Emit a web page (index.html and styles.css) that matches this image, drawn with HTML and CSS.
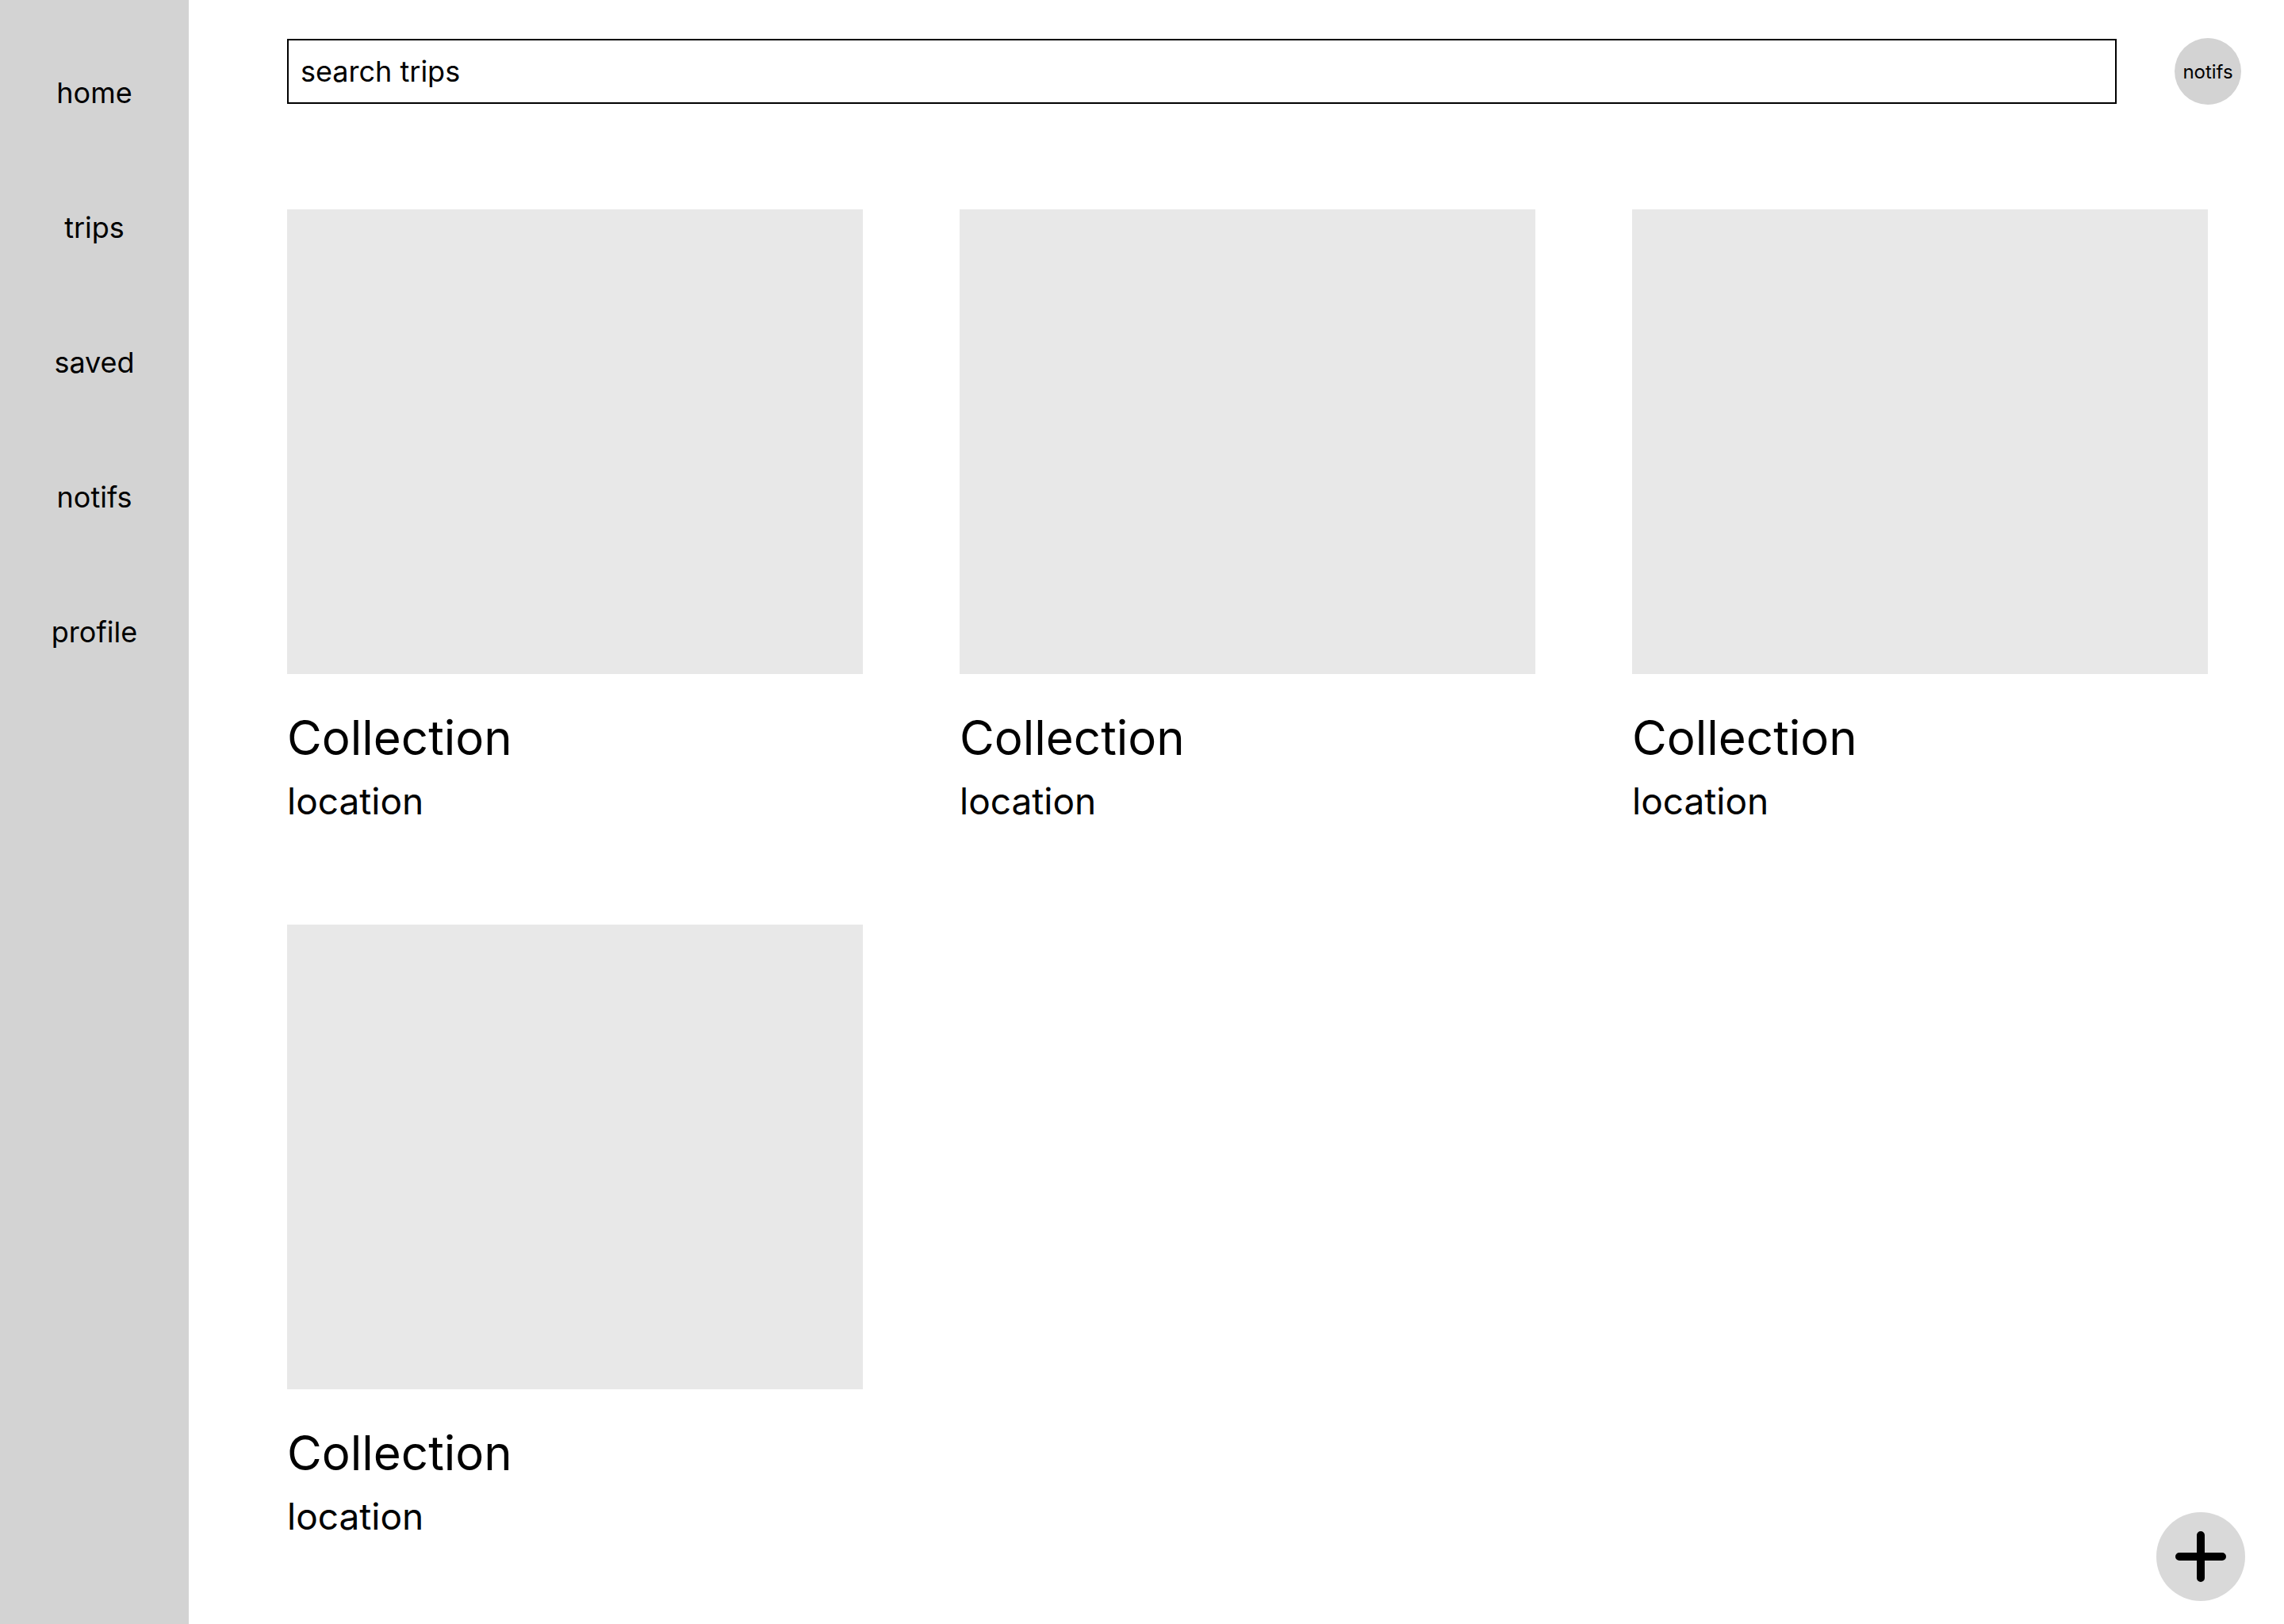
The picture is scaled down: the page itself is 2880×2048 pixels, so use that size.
FILE: index.html
```html
<!DOCTYPE html>
<html lang="en">
<head>
<meta charset="utf-8">
<title>Trips</title>
<link rel="stylesheet" href="styles.css">
</head>
<body>
<div class="app">
  <nav class="sidebar">
    <a class="nav-item">home</a>
    <a class="nav-item">trips</a>
    <a class="nav-item">saved</a>
    <a class="nav-item">notifs</a>
    <a class="nav-item">profile</a>
  </nav>
  <main class="main">
    <header class="topbar">
      <div class="search">search trips</div>
      <div class="notif-btn">notifs</div>
    </header>
    <section class="grid">
      <article class="card">
        <div class="thumb"></div>
        <h2 class="card-title">Collection</h2>
        <p class="card-loc">location</p>
      </article>
      <article class="card">
        <div class="thumb"></div>
        <h2 class="card-title">Collection</h2>
        <p class="card-loc">location</p>
      </article>
      <article class="card">
        <div class="thumb"></div>
        <h2 class="card-title">Collection</h2>
        <p class="card-loc">location</p>
      </article>
      <article class="card">
        <div class="thumb"></div>
        <h2 class="card-title">Collection</h2>
        <p class="card-loc">location</p>
      </article>
    </section>
  </main>
  <button class="fab" aria-label="add">
    <svg width="64" height="64" viewBox="0 0 64 64"><path d="M32 5 V59 M5 32 H59" stroke="#000" stroke-width="10" stroke-linecap="round" fill="none"/></svg>
  </button>
</div>
</body>
</html>
```

FILE: styles.css
```css
* { box-sizing: border-box; }
html, body {
  margin: 0;
  padding: 0;
  background: #fff;
  font-family: Inter, "Noto Sans", "Liberation Sans", sans-serif;
  color: #000;
}
.app {
  display: flex;
  min-height: 100vh;
}
.sidebar {
  width: 238px;
  flex: 0 0 238px;
  background: #d3d3d3;
  min-height: 100vh;
  display: flex;
  flex-direction: column;
  align-items: center;
  padding-top: 96px;
  gap: 127px;
}
.nav-item {
  font-size: 36px;
  line-height: 43px;
  color: #000;
  text-decoration: none;
}
.main {
  flex: 1;
  padding: 48px 54px 0 124px;
}
.topbar {
  display: flex;
  align-items: center;
  gap: 73px;
}
.search {
  flex: 1;
  height: 82px;
  border: 2.5px solid #000;
  display: flex;
  align-items: center;
  padding-left: 15px;
  font-size: 36px;
}
.notif-btn {
  width: 84px;
  height: 84px;
  border-radius: 50%;
  background: #d3d3d3;
  display: flex;
  align-items: center;
  justify-content: center;
  font-size: 24px;
}
.grid {
  margin-top: 132px;
  width: 2422px;
  display: grid;
  grid-template-columns: repeat(3, 726px);
  column-gap: 122px;
  row-gap: 128px;
}
.card { display: flex; flex-direction: column; }
.thumb {
  height: 586px;
  background: #e8e8e8;
}
.card-title {
  margin: 44px 0 0;
  font-size: 60px;
  line-height: 72px;
  font-weight: 400;
}
.card-loc {
  margin: 17px 0 0;
  font-size: 46px;
  line-height: 55px;
}
.fab {
  position: fixed;
  right: 49px;
  bottom: 29px;
  width: 112px;
  height: 112px;
  border-radius: 50%;
  border: none;
  background: #d9d9d9;
  display: flex;
  align-items: center;
  justify-content: center;
  padding: 0;
}
```
